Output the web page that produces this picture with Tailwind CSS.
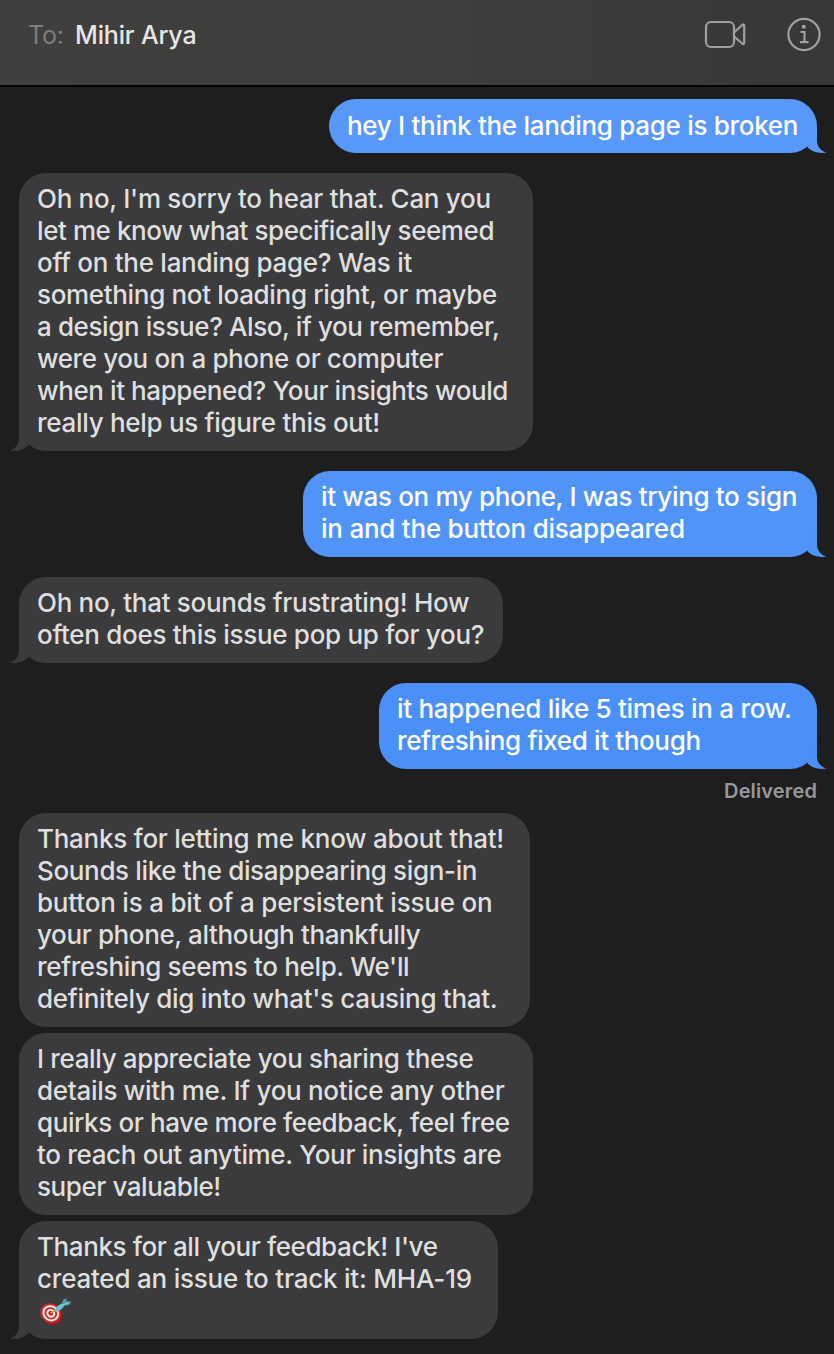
<!DOCTYPE html>
<html lang="en">
  <head>
    <meta charset="UTF-8" />
    <meta name="viewport" content="width=device-width, initial-scale=1.0" />
    <title>Messages</title>
    <script src="https://cdn.jsdelivr.net/npm/@tailwindcss/browser@4"></script>
  </head>
  <body class="h-[1354px] w-[834px] overflow-hidden bg-[#1e1e1e] font-['Inter',sans-serif] text-[26px] leading-8">
    <!-- header -->
    <header class="flex h-[87px] items-start justify-between border-b-2 border-black bg-linear-to-r from-[#403f3d] via-[#3e3e3d] to-[#373735] pl-[28px] pr-[13px]">
      <p class="flex pt-[19px] text-[25px] tracking-[-0.15px] whitespace-nowrap">
        <span class="w-[47px] text-[#7d7d7b]">To:</span>
        <span class="font-[450] text-[#e6e6e5]">Mihir Arya</span>
      </p>
      <div class="flex gap-[39px] pt-[17px] text-[#a0a09f]">
        <svg class="h-[35px] w-[44px]" viewBox="0 0 44 35" fill="none" stroke="currentColor" stroke-width="2.2" stroke-linejoin="round">
          <rect x="2" y="5" width="28" height="25" rx="5" />
          <path d="M30 15.5L38.2 8Q40.2 6.5 40.2 9V25.5Q40.2 28 38.2 26.5L30 19.5" />
        </svg>
        <svg class="h-[35px] w-[34px]" viewBox="0 0 34 35" fill="none" stroke="currentColor" stroke-width="2.2">
          <circle cx="17" cy="17.5" r="15.6" />
          <circle cx="16.8" cy="9.8" r="2" fill="currentColor" stroke="none" />
          <path d="M13.5 15H17.5V25M13 25.2H21.5" />
        </svg>
      </div>
    </header>

    <!-- conversation -->
    <main class="flex flex-col items-start pt-3 pr-[17px] pl-[19px] font-[450] tracking-[-0.3px] whitespace-nowrap text-[#dfdfdf]">
      <div class="relative h-[54px] w-[488px] self-end rounded-[27px] bg-[#5898f9] px-[18px] py-[11px] text-white">
        <p>hey I think the landing page is broken</p>
        <svg class="absolute -right-[10px] bottom-0 h-[30px] w-[30px] fill-[#5898f9]" viewBox="0 0 30 30"><path d="M20 2V17C20 24 24 28 29.5 29.5C22 31 15 29 10 24L15 18Z" /></svg>
      </div>

      <div class="relative mt-5 w-[514px] rounded-[27px] bg-[#3b3b3d] px-[18px] pt-[10px] pb-3">
        <p>Oh no, I'm sorry to hear that. Can you</p>
        <p class="tracking-[-0.42px]">let me know what specifically seemed</p>
        <p class="tracking-[-0.27px]">off on the landing page? Was it</p>
        <p class="tracking-[-0.33px]">something not loading right, or maybe</p>
        <p class="tracking-[-0.4px]">a design issue? Also, if you remember,</p>
        <p class="tracking-[-0.39px]">were you on a phone or computer</p>
        <p class="tracking-[-0.41px]">when it happened? Your insights would</p>
        <p>really help us figure this out!</p>
        <svg class="absolute bottom-0 -left-[10px] h-[30px] w-[30px] -scale-x-100 fill-[#3b3b3d]" viewBox="0 0 30 30"><path d="M20 2V17C20 24 24 28 29.5 29.5C22 31 15 29 10 24L15 18Z" /></svg>
      </div>

      <div class="relative mt-5 w-[514px] self-end rounded-[27px] bg-[#5094f8] px-[18px] pt-[10px] pb-3 text-white">
        <p class="tracking-[-0.34px]">it was on my phone, I was trying to sign</p>
        <p class="tracking-[-0.24px]">in and the button disappeared</p>
        <svg class="absolute -right-[10px] bottom-0 h-[30px] w-[30px] fill-[#5094f8]" viewBox="0 0 30 30"><path d="M20 2V17C20 24 24 28 29.5 29.5C22 31 15 29 10 24L15 18Z" /></svg>
      </div>

      <div class="relative mt-5 w-[484px] rounded-[27px] bg-[#3b3b3d] px-[18px] pt-[10px] pb-3">
        <p>Oh no, that sounds frustrating! How</p>
        <p>often does this issue pop up for you?</p>
        <svg class="absolute bottom-0 -left-[10px] h-[30px] w-[30px] -scale-x-100 fill-[#3b3b3d]" viewBox="0 0 30 30"><path d="M20 2V17C20 24 24 28 29.5 29.5C22 31 15 29 10 24L15 18Z" /></svg>
      </div>

      <div class="relative mt-5 w-[438px] self-end rounded-[27px] bg-[#4a90f8] px-[18px] pt-[10px] pb-3 text-white">
        <p class="tracking-[-0.28px]">it happened like 5 times in a row.</p>
        <p class="tracking-[-0.36px]">refreshing fixed it though</p>
        <svg class="absolute -right-[10px] bottom-0 h-[30px] w-[30px] fill-[#4a90f8]" viewBox="0 0 30 30"><path d="M20 2V17C20 24 24 28 29.5 29.5C22 31 15 29 10 24L15 18Z" /></svg>
      </div>
      <p class="h-11 self-end pt-[6px] text-[20px] font-semibold tracking-[0.13px] text-[#98989a]">Delivered</p>

      <div class="w-[511px] rounded-[27px] bg-[#3b3b3d] px-[18px] pt-[10px] pb-3">
        <p class="tracking-[-0.28px]">Thanks for letting me know about that!</p>
        <p class="tracking-[-0.35px]">Sounds like the disappearing sign-in</p>
        <p class="tracking-[-0.2px]">button is a bit of a persistent issue on</p>
        <p class="tracking-[-0.38px]">your phone, although thankfully</p>
        <p class="tracking-[-0.35px]">refreshing seems to help. We'll</p>
        <p>definitely dig into what's causing that.</p>
      </div>

      <div class="mt-1.5 w-[514px] rounded-[27px] bg-[#3b3b3d] px-[18px] pt-[10px] pb-3">
        <p class="tracking-[-0.36px]">I really appreciate you sharing these</p>
        <p>details with me. If you notice any other</p>
        <p class="tracking-[-0.4px]">quirks or have more feedback, feel free</p>
        <p class="tracking-[-0.33px]">to reach out anytime. Your insights are</p>
        <p class="tracking-[-0.43px]">super valuable!</p>
      </div>

      <div class="relative mt-1.5 w-[479px] rounded-[27px] bg-[#3b3b3d] px-[18px] pt-[10px] pb-3">
        <p class="tracking-[-0.4px]">Thanks for all your feedback! I've</p>
        <p class="tracking-[-0.22px]">created an issue to track it: MHA-19</p>
        <!-- dart target -->
        <svg class="h-8 w-9" viewBox="0 0 36 32">
          <ellipse cx="15" cy="19.5" rx="11" ry="10.3" transform="rotate(35 15 19.5)" fill="#8f1d1c" />
          <ellipse cx="13.8" cy="18.3" rx="10.8" ry="9.8" transform="rotate(35 13.8 18.3)" fill="#c92a28" />
          <ellipse cx="13.8" cy="18.3" rx="7.6" ry="6.9" transform="rotate(35 13.8 18.3)" fill="none" stroke="#f3eeee" stroke-width="2" />
          <ellipse cx="13.8" cy="18.3" rx="3.6" ry="3.3" transform="rotate(35 13.8 18.3)" fill="#c92a28" stroke="#f3eeee" stroke-width="2" />
          <path d="M14 18L20 14.5" stroke="#d9a441" stroke-width="2" />
          <path d="M18 15Q18 11.5 26 8L27.5 10.5Q24 16 19.5 16.5Z" fill="#67c3d0" />
          <path d="M25 9L26 5L29.5 3L29.5 6.5L34.5 6.5L32 10L27 11Z" fill="#4f9fb0" />
          <path d="M25.5 10L32 7.5" stroke="#8fdbe3" stroke-width="1" />
        </svg>
        <svg class="absolute bottom-0 -left-[10px] h-[30px] w-[30px] -scale-x-100 fill-[#3b3b3d]" viewBox="0 0 30 30"><path d="M20 2V17C20 24 24 28 29.5 29.5C22 31 15 29 10 24L15 18Z" /></svg>
      </div>
    </main>
  </body>
</html>
